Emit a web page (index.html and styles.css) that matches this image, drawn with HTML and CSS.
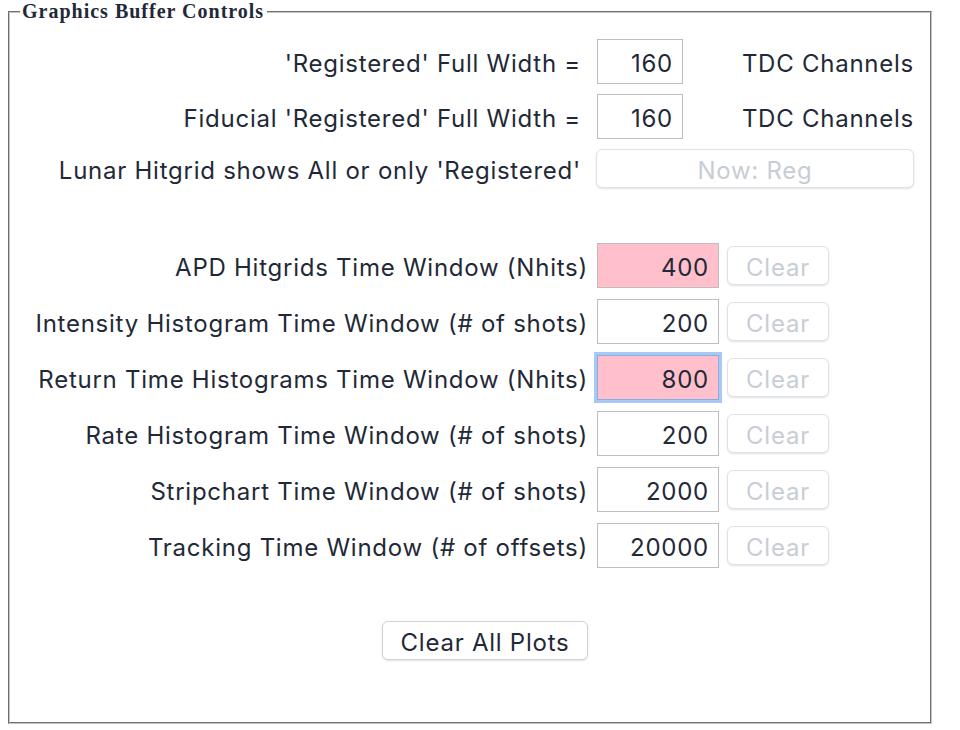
FILE: index.html
```html
<!DOCTYPE html>
<html>
<head>
<meta charset="utf-8">
<link rel="stylesheet" href="styles.css">
</head>
<body>
<fieldset class="panel">
  <legend class="panel-title">Graphics Buffer Controls</legend>
  <div class="grid-top">
    <label class="lbl">'Registered' Full Width =</label>
    <input class="num num-sm" type="text" value="160">
    <span class="unit">TDC Channels</span>

    <label class="lbl">Fiducial 'Registered' Full Width =</label>
    <input class="num num-sm" type="text" value="160">
    <span class="unit">TDC Channels</span>

    <label class="lbl">Lunar Hitgrid shows All or only 'Registered'</label>
    <button class="btn btn-disabled btn-wide" disabled>Now: Reg</button>
  </div>

  <div class="grid-win">
    <label class="lbl">APD Hitgrids Time Window (Nhits)</label>
    <input class="num num-pink" type="text" value="400">
    <button class="btn btn-disabled" disabled>Clear</button>

    <label class="lbl">Intensity Histogram Time Window (# of shots)</label>
    <input class="num" type="text" value="200">
    <button class="btn btn-disabled" disabled>Clear</button>

    <label class="lbl">Return Time Histograms Time Window (Nhits)</label>
    <input class="num num-pink num-focus" type="text" value="800">
    <button class="btn btn-disabled" disabled>Clear</button>

    <label class="lbl">Rate Histogram Time Window (# of shots)</label>
    <input class="num" type="text" value="200">
    <button class="btn btn-disabled" disabled>Clear</button>

    <label class="lbl">Stripchart Time Window (# of shots)</label>
    <input class="num" type="text" value="2000">
    <button class="btn btn-disabled" disabled>Clear</button>

    <label class="lbl">Tracking Time Window (# of offsets)</label>
    <input class="num" type="text" value="20000">
    <button class="btn btn-disabled" disabled>Clear</button>
  </div>

  <div class="footer">
    <button class="btn btn-main">Clear All Plots</button>
  </div>
</fieldset>
</body>
</html>
```

FILE: styles.css
```css
html, body {
  margin: 0;
  padding: 0;
  background: #ffffff;
}

body {
  padding-left: 8px;
  font-family: Inter, "Noto Sans", sans-serif;
  font-size: 24px;
  letter-spacing: 0.75px;
  color: #1f2937;
}

.panel {
  box-sizing: border-box;
  width: 924px;
  margin: 0;
  padding: 16px 10px 62px 10px;
  border: 2px groove #c4c4c4;
}

.panel-title {
  font-family: "Liberation Serif", "Times New Roman", serif;
  font-weight: bold;
  font-size: 20px;
  letter-spacing: 1px;
  padding: 0 3px 0 2px;
  color: #1f2937;
}

.grid-top {
  display: grid;
  grid-template-columns: 577px 86px 231px;
  grid-template-rows: 45px 45px 39px;
  row-gap: 10px;
  align-items: center;
}

.grid-win {
  display: grid;
  grid-template-columns: 569px 122px 102px;
  grid-auto-rows: 45px;
  row-gap: 11px;
  column-gap: 8px;
  align-items: center;
  margin-top: 55px;
}

.lbl {
  text-align: right;
  white-space: nowrap;
  padding-right: 16px;
  padding-top: 4px;
}

.grid-win .lbl {
  padding-right: 1px;
}

.unit {
  text-align: right;
  white-space: nowrap;
  padding-top: 4px;
}

.num {
  box-sizing: border-box;
  width: 122px;
  height: 45px;
  margin: 0;
  border: 1px solid #bdbdbd;
  border-radius: 0;
  background: #ffffff;
  font-family: Inter, "Noto Sans", sans-serif;
  font-size: 24px;
  letter-spacing: 0.75px;
  color: #1f2937;
  text-align: right;
  padding: 4px 9px 0 4px;
  outline: none;
}

.num-sm {
  width: 86px;
}

.num-pink {
  background: #ffc0cb;
}

.num-focus {
  border-color: #86aee6;
  box-shadow: 0 0 0 3px #a9c9f4;
}

.btn {
  box-sizing: border-box;
  height: 39px;
  margin: 0;
  background: #ffffff;
  border: 1px solid #dfe2e6;
  border-radius: 6px;
  box-shadow: 0 1px 2px rgba(0, 0, 0, 0.12);
  font-family: Inter, "Noto Sans", sans-serif;
  font-size: 24px;
  letter-spacing: 0.75px;
  padding: 3px 0 0 0;
}

.btn-disabled {
  color: #c8cdd5;
}

.btn-wide {
  grid-column: 2 / 4;
  width: 318px;
  margin-left: -1px;
}

.btn-main {
  width: 206px;
  color: #1f2937;
  border-color: #cfd3d8;
}

.footer {
  margin-top: 53px;
  padding-left: 362px;
}
```
